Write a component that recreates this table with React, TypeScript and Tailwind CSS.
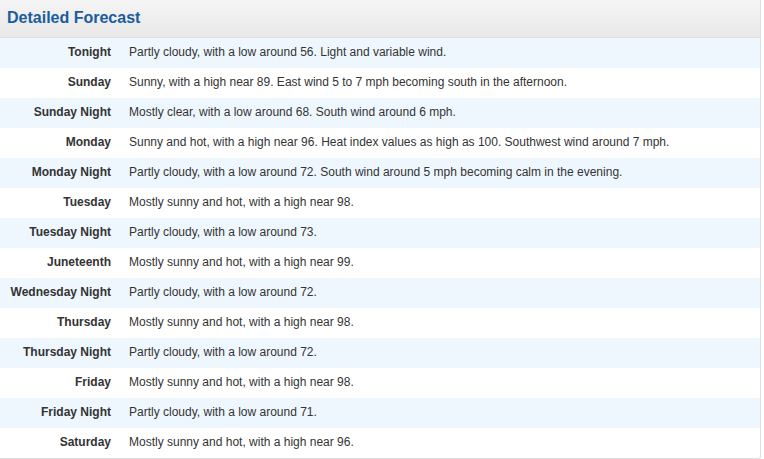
import React from "react";

const rows: [string, string][] = [
  ["Tonight", "Partly cloudy, with a low around 56. Light and variable wind."],
  ["Sunday", "Sunny, with a high near 89. East wind 5 to 7 mph becoming south in the afternoon."],
  ["Sunday Night", "Mostly clear, with a low around 68. South wind around 6 mph."],
  ["Monday", "Sunny and hot, with a high near 96. Heat index values as high as 100. Southwest wind around 7 mph."],
  ["Monday Night", "Partly cloudy, with a low around 72. South wind around 5 mph becoming calm in the evening."],
  ["Tuesday", "Mostly sunny and hot, with a high near 98."],
  ["Tuesday Night", "Partly cloudy, with a low around 73."],
  ["Juneteenth", "Mostly sunny and hot, with a high near 99."],
  ["Wednesday Night", "Partly cloudy, with a low around 72."],
  ["Thursday", "Mostly sunny and hot, with a high near 98."],
  ["Thursday Night", "Partly cloudy, with a low around 72."],
  ["Friday", "Mostly sunny and hot, with a high near 98."],
  ["Friday Night", "Partly cloudy, with a low around 71."],
  ["Saturday", "Mostly sunny and hot, with a high near 96."],
];

export default function App() {
  return (
    <div className="w-[764px] h-[459px] bg-white" style={{ fontFamily: '"Liberation Sans", Arial, sans-serif' }}>
      <div className="w-[761px] border-r border-b border-[#dddddd] rounded-br-[3px] overflow-hidden">
        <div className="h-[38px] border-b border-[#dddddd] bg-gradient-to-b from-[#f5f5f5] to-[#e8e8e8] flex items-center pl-[7px]">
          <h2 className="text-[16px] font-bold text-[#1b5c9e] leading-none mt-[-2px]">Detailed Forecast</h2>
        </div>
        {rows.map(([label, text], i) => (
          <div
            key={label}
            className={`h-[30px] pb-[2px] flex items-center text-[12px] text-[#333333] ${i % 2 === 0 ? "bg-[#eff7fe]" : "bg-white"}`}
          >
            <div className="w-[111px] shrink-0 text-right font-bold">{label}</div>
            <div className="pl-[18px] whitespace-nowrap">{text}</div>
          </div>
        ))}
      </div>
    </div>
  );
}
